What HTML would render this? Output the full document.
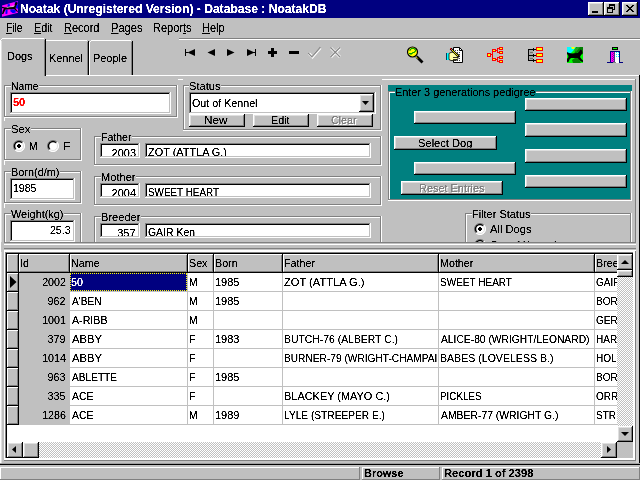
<!DOCTYPE html>
<html><head><meta charset="utf-8"><title>Noatak</title>
<style>
html,body{margin:0;padding:0;width:640px;height:480px;overflow:hidden;background:#c0c0c0}
body{position:relative;font-family:"Liberation Sans", sans-serif;}
body>div,body>span,body>svg{position:absolute;display:block}
body>span{white-space:pre}
u{text-decoration:underline;text-underline-offset:1px}
.tx{filter:url(#tf)}
</style></head>
<body>
<svg width="0" height="0" style="position:absolute"><filter id="tf" x="0" y="0" width="100%" height="100%" color-interpolation-filters="sRGB"><feComponentTransfer><feFuncA type="linear" slope="3" intercept="-0.7"/></feComponentTransfer></filter></svg>
<div style="left:0px;top:0px;width:640px;height:18px;background:#000080;"></div>
<span class="tx" style="left:20px;transform-origin:0 0;top:1px;font-size:13px;font-weight:700;color:#fff;line-height:15px;transform:scaleX(0.9304);">Noatak (Unregistered Version) - Database : NoatakDB</span>
<svg style="left:0px;top:0px" width="20" height="18" viewBox="0 0 20 18">
<path d="M2 5.600L18 1.100V12.800L2 16.800Z" fill="#ff00ff"/>
<path d="M7.500 4.300l2.200-.3.300 2.400-2.200.5z M14.600 2.200l3-.8v2.800l-2.600.5z M15.800 5l2.200-.4v4.200l-2.200-.5z M5.600 9.800l2-.3-.2 4.200-1.900.4z M10.500 9.200l5 .2.300 3.200-3 .6-2.500-2z" fill="#0000ff"/>
<path d="M2.100 6.800l3 .7 2.600-.8 3.500.1 3.200-1.200 1-3 1.800-.5.400 2-1.500 1.600-.5 2.800 2.400 3-.8.600-3-3-4.500.1-4.200.3-2.300 4.700-1.200-.2.800-3.400 1.200-2-2.200-.5z" fill="#000"/>
<path d="M6.500 7.300l3-.9 3.500-.3 1.500-.8.200.8-1.600.9-3.600.3-3 .8z" fill="#d8c8d8"/>
<path d="M12 5.800l2.300-.4v.7l-2.300.4z" fill="#ff80ff"/>
</svg>
<div style="left:588px;top:2px;width:16px;height:14px;background:#c0c0c0;"></div>
<div style="left:588px;top:2px;width:15px;height:1px;background:#fff;"></div>
<div style="left:588px;top:2px;width:1px;height:13px;background:#fff;"></div>
<div style="left:589px;top:3px;width:13px;height:1px;background:#dfdfdf;"></div>
<div style="left:589px;top:3px;width:1px;height:11px;background:#dfdfdf;"></div>
<div style="left:588px;top:15px;width:16px;height:1px;background:#000;"></div>
<div style="left:603px;top:2px;width:1px;height:14px;background:#000;"></div>
<div style="left:589px;top:14px;width:14px;height:1px;background:#808080;"></div>
<div style="left:602px;top:3px;width:1px;height:12px;background:#808080;"></div>
<div style="left:604px;top:2px;width:16px;height:14px;background:#c0c0c0;"></div>
<div style="left:604px;top:2px;width:15px;height:1px;background:#fff;"></div>
<div style="left:604px;top:2px;width:1px;height:13px;background:#fff;"></div>
<div style="left:605px;top:3px;width:13px;height:1px;background:#dfdfdf;"></div>
<div style="left:605px;top:3px;width:1px;height:11px;background:#dfdfdf;"></div>
<div style="left:604px;top:15px;width:16px;height:1px;background:#000;"></div>
<div style="left:619px;top:2px;width:1px;height:14px;background:#000;"></div>
<div style="left:605px;top:14px;width:14px;height:1px;background:#808080;"></div>
<div style="left:618px;top:3px;width:1px;height:12px;background:#808080;"></div>
<div style="left:622px;top:2px;width:16px;height:14px;background:#c0c0c0;"></div>
<div style="left:622px;top:2px;width:15px;height:1px;background:#fff;"></div>
<div style="left:622px;top:2px;width:1px;height:13px;background:#fff;"></div>
<div style="left:623px;top:3px;width:13px;height:1px;background:#dfdfdf;"></div>
<div style="left:623px;top:3px;width:1px;height:11px;background:#dfdfdf;"></div>
<div style="left:622px;top:15px;width:16px;height:1px;background:#000;"></div>
<div style="left:637px;top:2px;width:1px;height:14px;background:#000;"></div>
<div style="left:623px;top:14px;width:14px;height:1px;background:#808080;"></div>
<div style="left:636px;top:3px;width:1px;height:12px;background:#808080;"></div>
<div style="left:592px;top:11px;width:6px;height:2px;background:#000;"></div>
<div style="left:609px;top:4px;width:6px;height:2px;background:#000;"></div>
<div style="left:609px;top:6px;width:1px;height:2px;background:#000;"></div>
<div style="left:614px;top:6px;width:1px;height:4px;background:#000;"></div>
<div style="left:613px;top:9px;width:2px;height:1px;background:#000;"></div>
<div style="left:607px;top:7px;width:6px;height:2px;background:#000;"></div>
<div style="left:607px;top:9px;width:1px;height:4px;background:#000;"></div>
<div style="left:612px;top:9px;width:1px;height:4px;background:#000;"></div>
<div style="left:607px;top:12px;width:6px;height:1px;background:#000;"></div>
<div style="left:626px;top:5px;width:2px;height:1px;background:#000;"></div>
<div style="left:632px;top:5px;width:2px;height:1px;background:#000;"></div>
<div style="left:627px;top:6px;width:2px;height:1px;background:#000;"></div>
<div style="left:631px;top:6px;width:2px;height:1px;background:#000;"></div>
<div style="left:628px;top:7px;width:2px;height:1px;background:#000;"></div>
<div style="left:630px;top:7px;width:2px;height:1px;background:#000;"></div>
<div style="left:629px;top:8px;width:2px;height:1px;background:#000;"></div>
<div style="left:629px;top:8px;width:2px;height:1px;background:#000;"></div>
<div style="left:630px;top:9px;width:2px;height:1px;background:#000;"></div>
<div style="left:628px;top:9px;width:2px;height:1px;background:#000;"></div>
<div style="left:631px;top:10px;width:2px;height:1px;background:#000;"></div>
<div style="left:627px;top:10px;width:2px;height:1px;background:#000;"></div>
<div style="left:632px;top:11px;width:2px;height:1px;background:#000;"></div>
<div style="left:626px;top:11px;width:2px;height:1px;background:#000;"></div>
<span class="tx" style="left:6px;transform-origin:0 0;top:20px;font-size:13px;font-weight:400;color:#000;line-height:15px;transform:scaleX(0.7875);"><u>F</u>ile</span>
<span class="tx" style="left:34px;transform-origin:0 0;top:20px;font-size:13px;font-weight:400;color:#000;line-height:15px;transform:scaleX(0.8257);"><u>E</u>dit</span>
<span class="tx" style="left:64px;transform-origin:0 0;top:20px;font-size:13px;font-weight:400;color:#000;line-height:15px;transform:scaleX(0.8468);"><u>R</u>ecord</span>
<span class="tx" style="left:111px;transform-origin:0 0;top:20px;font-size:13px;font-weight:400;color:#000;line-height:15px;transform:scaleX(0.8542);"><u>P</u>ages</span>
<span class="tx" style="left:153px;transform-origin:0 0;top:20px;font-size:13px;font-weight:400;color:#000;line-height:15px;transform:scaleX(0.8456);">Repor<u>t</u>s</span>
<span class="tx" style="left:202px;transform-origin:0 0;top:20px;font-size:13px;font-weight:400;color:#000;line-height:15px;transform:scaleX(0.8411);"><u>H</u>elp</span>
<div style="left:46px;top:75px;width:594px;height:1px;background:#fff;"></div>
<div style="left:2px;top:38px;width:42px;height:1px;background:#fff;"></div>
<div style="left:0px;top:40px;width:1px;height:424px;background:#fff;"></div>
<div style="left:1px;top:41px;width:1px;height:423px;background:#dfdfdf;"></div>
<div style="left:1px;top:39px;width:1px;height:1px;background:#fff;"></div>
<div style="left:45px;top:39px;width:1px;height:37px;background:#000;"></div>
<div style="left:44px;top:40px;width:1px;height:36px;background:#808080;"></div>
<span class="tx" style="left:7px;transform-origin:0 0;top:49px;font-size:11.7px;font-weight:400;color:#000;line-height:14px;transform:scaleX(0.9342);">Dogs</span>
<div style="left:46px;top:40px;width:41px;height:1px;background:#fff;"></div>
<div style="left:88px;top:41px;width:1px;height:34px;background:#000;"></div>
<div style="left:87px;top:42px;width:1px;height:33px;background:#808080;"></div>
<span class="tx" style="left:49px;transform-origin:0 0;top:51px;font-size:11.7px;font-weight:400;color:#000;line-height:14px;transform:scaleX(0.9339);">Kennel</span>
<div style="left:91px;top:40px;width:40px;height:1px;background:#fff;"></div>
<div style="left:89px;top:42px;width:1px;height:33px;background:#fff;"></div>
<div style="left:90px;top:41px;width:1px;height:1px;background:#fff;"></div>
<div style="left:132px;top:41px;width:1px;height:34px;background:#000;"></div>
<div style="left:131px;top:42px;width:1px;height:33px;background:#808080;"></div>
<span class="tx" style="left:93px;transform-origin:0 0;top:51px;font-size:11.7px;font-weight:400;color:#000;line-height:14px;transform:scaleX(0.9339);">People</span>
<div style="left:179px;top:38px;width:461px;height:1px;background:#808080;"></div>
<div style="left:179px;top:39px;width:461px;height:1px;background:#fff;"></div>
<svg style="left:180px;top:40px" width="460" height="34" viewBox="180 40 460 34"><rect x="185" y="49" width="1" height="7" fill="#000"/><path d="M195 49v7l-7.5-3.5z" fill="#000"/><rect x="186" y="52" width="2" height="1" fill="#000"/><path d="M215 49v7l-7.5-3.5z" fill="#000"/><path d="M227 49v7l7.5-3.5z" fill="#000"/><path d="M247 49v7l7.5-3.5z" fill="#000"/><rect x="255" y="49" width="1" height="7" fill="#000"/><rect x="253" y="52" width="2" height="1" fill="#000"/><rect x="268" y="51" width="9" height="3" fill="#000"/><rect x="271" y="48" width="3" height="9" fill="#000"/><rect x="289" y="51" width="10" height="3" fill="#000"/><path d="M309 53.5l3.5 3.5 8-9" stroke="#fff" stroke-width="2.6" fill="none"/><path d="M308.3 53.2l3.6 3.6 8.4-9.6" stroke="#808080" stroke-width="1.200" fill="none"/><path d="M310.5 55l2 1.800 8-9" stroke="#a0a0a0" stroke-width="0.7" fill="none"/><path d="M331 48l9 9M340 48l-9 9" stroke="#fff" stroke-width="2.6" fill="none"/><path d="M330.5 47.5l9.5 9.5M340 47.5l-9.5 9.5" stroke="#868686" stroke-width="1.200" fill="none"/><line x1="416.500" y1="56.500" x2="422.500" y2="62.500" stroke="#000" stroke-width="2.800"/><line x1="416" y1="56.800" x2="417.800" y2="58.600" stroke="#e8e800" stroke-width="1"/><circle cx="412.500" cy="52" r="5" fill="#ffff00" stroke="#000" stroke-width="1.200"/><path d="M410 51v-1.500h1v-1h3.500v1h1v2h-1v1h-2v1h-1.500v1.500" stroke="#00a000" stroke-width="1" fill="none"/><rect x="409" y="53" width="2" height="1" fill="#00a000"/><path d="M453.500 47.500h6l3 3v12h-9z" fill="#fff" stroke="#000" stroke-width="1"/><path d="M459.500 47.500v3h3" fill="none" stroke="#000" stroke-width="1"/><line x1="455" y1="50.5" x2="461" y2="50.5" stroke="#404040" stroke-width="1" stroke-dasharray="1 1"/><line x1="455" y1="52.5" x2="461" y2="52.5" stroke="#404040" stroke-width="1" stroke-dasharray="1 1"/><line x1="455" y1="54.5" x2="461" y2="54.5" stroke="#404040" stroke-width="1" stroke-dasharray="1 1"/><line x1="455" y1="56.5" x2="461" y2="56.5" stroke="#404040" stroke-width="1" stroke-dasharray="1 1"/><line x1="455" y1="58.5" x2="461" y2="58.5" stroke="#404040" stroke-width="1" stroke-dasharray="1 1"/><line x1="455" y1="60.5" x2="461" y2="60.5" stroke="#404040" stroke-width="1" stroke-dasharray="1 1"/><rect x="446" y="53" width="1" height="7" fill="#004060"/><rect x="447" y="53" width="2" height="7" fill="#00ffff"/><path d="M449 53.500q2-1.500 4-1.500l4 1.500q2 .8 2 2.500l-1 1.500v1.500l-2 1.500h-5l-2-1z" fill="#ffffa8" stroke="#000" stroke-width="0.8"/><line x1="450.500" y1="48.500" x2="458.800" y2="56.800" stroke="#000" stroke-width="2.200"/><line x1="451.200" y1="49.200" x2="458" y2="56" stroke="#ffff00" stroke-width="0.9"/><rect x="450" y="48" width="1" height="1" fill="#ff0000"/><rect x="451" y="49" width="1" height="1" fill="#ff4040"/><line x1="453" y1="57.500" x2="458" y2="57.500" stroke="#000" stroke-width="0.8"/><line x1="453" y1="59.500" x2="457" y2="59.500" stroke="#000" stroke-width="0.8"/><rect x="487" y="53" width="4" height="4" fill="#ff0000"/><rect x="488" y="54" width="2" height="2" fill="#ffff00"/><rect x="492" y="49" width="4" height="3" fill="#ff0000"/><rect x="493" y="50" width="2" height="1" fill="#ffff00"/><rect x="492" y="58" width="4" height="3" fill="#ff0000"/><rect x="493" y="59" width="2" height="1" fill="#ffff00"/><rect x="499" y="47" width="4" height="3" fill="#ff0000"/><rect x="500" y="48" width="2" height="1" fill="#ffff00"/><rect x="499" y="51" width="4" height="3" fill="#ff0000"/><rect x="500" y="52" width="2" height="1" fill="#ffff00"/><rect x="499" y="56" width="4" height="3" fill="#ff0000"/><rect x="500" y="57" width="2" height="1" fill="#ffff00"/><rect x="499" y="60" width="4" height="3" fill="#ff0000"/><rect x="500" y="61" width="2" height="1" fill="#ffff00"/><rect x="491" y="54" width="2" height="1" fill="#ff0000"/><rect x="492" y="52" width="1" height="6" fill="#ff0000"/><rect x="496" y="50" width="2" height="1" fill="#ff0000"/><rect x="497" y="48" width="1" height="5" fill="#ff0000"/><rect x="497" y="48" width="2" height="1" fill="#ff0000"/><rect x="497" y="52" width="2" height="1" fill="#ff0000"/><rect x="496" y="59" width="2" height="1" fill="#ff0000"/><rect x="497" y="57" width="1" height="5" fill="#ff0000"/><rect x="497" y="57" width="2" height="1" fill="#ff0000"/><rect x="497" y="61" width="2" height="1" fill="#ff0000"/><rect x="528" y="49" width="1" height="12" fill="#000"/><rect x="528" y="49" width="7" height="1" fill="#000"/><rect x="533" y="48" width="1" height="3" fill="#000"/><rect x="534" y="49" width="2" height="1" fill="#000"/><rect x="528" y="55" width="7" height="1" fill="#000"/><rect x="533" y="54" width="1" height="3" fill="#000"/><rect x="534" y="55" width="2" height="1" fill="#000"/><rect x="528" y="60" width="7" height="1" fill="#000"/><rect x="533" y="59" width="1" height="3" fill="#000"/><rect x="534" y="60" width="2" height="1" fill="#000"/><rect x="529" y="50" width="4" height="5" fill="#a8a8a8"/><rect x="529" y="56" width="4" height="4" fill="#a8a8a8"/><rect x="530" y="52" width="3" height="1" fill="#707070"/><rect x="530" y="58" width="3" height="1" fill="#707070"/><rect x="536" y="47" width="7" height="4" fill="#ff0000"/><rect x="537" y="48" width="5" height="2" fill="#ffff00"/><rect x="536" y="53" width="7" height="4" fill="#ff0000"/><rect x="537" y="54" width="5" height="2" fill="#ffff00"/><rect x="536" y="59" width="7" height="4" fill="#ff0000"/><rect x="537" y="60" width="5" height="2" fill="#ffff00"/><rect x="567" y="47" width="16" height="16" fill="#00ff00"/><path d="M567 47h9l-3 4-3 3h-3z" fill="#00ffff"/><path d="M571 47h4l-1 2h-2z" fill="#ffff00"/><path d="M576 47h7v7l-3 1-2-3-4 3z" fill="#008000"/><path d="M574 50l3-3h3l-4 5z" fill="#20a020"/><path d="M572 60l3-2 4 1 2 4h-8z" fill="#008000"/><path d="M567 52L569 53 572 53.500 577 53 579 52 580.500 49.500 582 50.500 582.500 53 581 55 580 57 581.500 59 583 60.500V62L581 61.500 578 58.500 575 58H571L569.500 59.500 568.500 62H567V59L568.500 57 568 55 567 54Z" fill="#000"/><rect x="612" y="47" width="6" height="3" fill="#000"/><rect x="613" y="48" width="4" height="1" fill="#00ff00"/><rect x="610" y="51" width="10" height="1" fill="#000080"/><rect x="610" y="51" width="1" height="12" fill="#000080"/><rect x="619" y="51" width="1" height="12" fill="#000080"/><rect x="607" y="62" width="16" height="1" fill="#000080"/><rect x="611" y="52" width="4" height="10" fill="#ff00ff"/><rect x="615" y="52" width="4" height="10" fill="#fff"/><rect x="612" y="52" width="1" height="1" fill="#a000a0"/><rect x="613" y="53" width="1" height="1" fill="#a000a0"/><rect x="616" y="52" width="1" height="1" fill="#00ffff"/><rect x="618" y="52" width="1" height="1" fill="#00ffff"/><rect x="612" y="54" width="1" height="1" fill="#a000a0"/><rect x="613" y="55" width="1" height="1" fill="#a000a0"/><rect x="616" y="54" width="1" height="1" fill="#00ffff"/><rect x="618" y="54" width="1" height="1" fill="#00ffff"/><rect x="612" y="56" width="1" height="1" fill="#a000a0"/><rect x="613" y="57" width="1" height="1" fill="#a000a0"/><rect x="616" y="56" width="1" height="1" fill="#00ffff"/><rect x="618" y="56" width="1" height="1" fill="#00ffff"/><rect x="612" y="58" width="1" height="1" fill="#a000a0"/><rect x="613" y="59" width="1" height="1" fill="#a000a0"/><rect x="616" y="58" width="1" height="1" fill="#00ffff"/><rect x="618" y="58" width="1" height="1" fill="#00ffff"/><rect x="612" y="60" width="1" height="1" fill="#a000a0"/><rect x="613" y="61" width="1" height="1" fill="#a000a0"/><rect x="616" y="60" width="1" height="1" fill="#00ffff"/><rect x="618" y="60" width="1" height="1" fill="#00ffff"/><path d="M615 57h4v6h-3l-1-1z" fill="#fff"/><rect x="614" y="52" width="1" height="10" fill="#404080"/><rect x="613" y="62" width="3" height="1" fill="#808080"/></svg>
<div style="left:178px;top:79px;width:5px;height:1px;background:#fff;"></div>
<div style="left:4px;top:85px;width:173px;height:1px;background:#808080;"></div>
<div style="left:5px;top:86px;width:172px;height:1px;background:#fff;"></div>
<div style="left:4px;top:85px;width:1px;height:32px;background:#808080;"></div>
<div style="left:5px;top:86px;width:1px;height:31px;background:#fff;"></div>
<div style="left:176px;top:85px;width:1px;height:32px;background:#808080;"></div>
<div style="left:177px;top:85px;width:1px;height:33px;background:#fff;"></div>
<div style="left:4px;top:116px;width:173px;height:1px;background:#808080;"></div>
<div style="left:4px;top:117px;width:174px;height:1px;background:#fff;"></div>
<div style="left:11px;top:85px;width:28px;height:2px;background:#c0c0c0;"></div>
<span class="tx" style="left:11px;transform-origin:0 0;top:79px;font-size:11.7px;font-weight:400;color:#000;line-height:14px;transform:scaleX(0.8818);">Name</span>
<div style="left:10px;top:92px;width:161px;height:22px;background:#fff;"></div>
<div style="left:10px;top:92px;width:160px;height:1px;background:#808080;"></div>
<div style="left:10px;top:92px;width:1px;height:21px;background:#808080;"></div>
<div style="left:11px;top:93px;width:158px;height:1px;background:#000;"></div>
<div style="left:11px;top:93px;width:1px;height:19px;background:#000;"></div>
<div style="left:10px;top:113px;width:161px;height:1px;background:#fff;"></div>
<div style="left:170px;top:92px;width:1px;height:22px;background:#fff;"></div>
<div style="left:11px;top:112px;width:159px;height:1px;background:#c0c0c0;"></div>
<div style="left:169px;top:93px;width:1px;height:20px;background:#c0c0c0;"></div>
<div style="left:12px;top:94px;width:157px;height:18px;overflow:hidden"><span class="tx" style="position:absolute;white-space:pre;left:1px;transform-origin:0 0;top:2px;font-size:11px;font-weight:700;color:#f00;line-height:13px;transform:scaleX(1.0000)">50</span></div>
<div style="left:4px;top:118px;width:1px;height:3px;background:#fff;"></div>
<div style="left:4px;top:128px;width:77px;height:1px;background:#808080;"></div>
<div style="left:5px;top:129px;width:76px;height:1px;background:#fff;"></div>
<div style="left:4px;top:128px;width:1px;height:32px;background:#808080;"></div>
<div style="left:5px;top:129px;width:1px;height:31px;background:#fff;"></div>
<div style="left:80px;top:128px;width:1px;height:32px;background:#808080;"></div>
<div style="left:81px;top:128px;width:1px;height:33px;background:#fff;"></div>
<div style="left:4px;top:159px;width:77px;height:1px;background:#808080;"></div>
<div style="left:4px;top:160px;width:78px;height:1px;background:#fff;"></div>
<div style="left:11px;top:128px;width:20px;height:2px;background:#c0c0c0;"></div>
<span class="tx" style="left:11px;transform-origin:0 0;top:122px;font-size:11.7px;font-weight:400;color:#000;line-height:14px;transform:scaleX(0.9682);">Sex</span>
<svg style="left:13px;top:140px" width="12" height="12" viewBox="0 0 12 12"><circle cx="6" cy="6" r="5.5" fill="#fff"/><path d="M10 2 A5.5 5.5 0 0 0 2 10" stroke="#808080" stroke-width="1" fill="none"/><path d="M9.2 2.800 A4.500 4.500 0 0 0 2.800 9.200" stroke="#000" stroke-width="1.500" fill="none"/><path d="M2 10 A5.5 5.5 0 0 0 10 2" stroke="#fff" stroke-width="1" fill="none"/><path d="M2.8 9.2 A4.5 4.5 0 0 0 9.2 2.8" stroke="#dfdfdf" stroke-width="1" fill="none"/><path d="M5 4h2v1h1v2h-1v1h-2v-1h-1v-2h1z" fill="#000"/></svg>
<span class="tx" style="left:29px;transform-origin:0 0;top:139px;font-size:11.7px;font-weight:400;color:#000;line-height:14px;transform:scaleX(0.8718);">M</span>
<svg style="left:47px;top:140px" width="12" height="12" viewBox="0 0 12 12"><circle cx="6" cy="6" r="5.5" fill="#fff"/><path d="M10 2 A5.5 5.5 0 0 0 2 10" stroke="#808080" stroke-width="1" fill="none"/><path d="M9.2 2.800 A4.500 4.500 0 0 0 2.800 9.200" stroke="#000" stroke-width="1.500" fill="none"/><path d="M2 10 A5.5 5.5 0 0 0 10 2" stroke="#fff" stroke-width="1" fill="none"/><path d="M2.8 9.2 A4.5 4.5 0 0 0 9.2 2.8" stroke="#dfdfdf" stroke-width="1" fill="none"/></svg>
<span class="tx" style="left:63px;transform-origin:0 0;top:139px;font-size:11.7px;font-weight:400;color:#000;line-height:14px;transform:scaleX(1.0503);">F</span>
<div style="left:4px;top:161px;width:1px;height:4px;background:#fff;"></div>
<div style="left:4px;top:171px;width:77px;height:1px;background:#808080;"></div>
<div style="left:5px;top:172px;width:76px;height:1px;background:#fff;"></div>
<div style="left:4px;top:171px;width:1px;height:32px;background:#808080;"></div>
<div style="left:5px;top:172px;width:1px;height:31px;background:#fff;"></div>
<div style="left:80px;top:171px;width:1px;height:32px;background:#808080;"></div>
<div style="left:81px;top:171px;width:1px;height:33px;background:#fff;"></div>
<div style="left:4px;top:202px;width:77px;height:1px;background:#808080;"></div>
<div style="left:4px;top:203px;width:78px;height:1px;background:#fff;"></div>
<div style="left:11px;top:171px;width:49px;height:2px;background:#c0c0c0;"></div>
<span class="tx" style="left:11px;transform-origin:0 0;top:165px;font-size:11.7px;font-weight:400;color:#000;line-height:14px;transform:scaleX(0.9333);">Born(d/m)</span>
<div style="left:10px;top:178px;width:65px;height:22px;background:#fff;"></div>
<div style="left:10px;top:178px;width:64px;height:1px;background:#808080;"></div>
<div style="left:10px;top:178px;width:1px;height:21px;background:#808080;"></div>
<div style="left:11px;top:179px;width:62px;height:1px;background:#000;"></div>
<div style="left:11px;top:179px;width:1px;height:19px;background:#000;"></div>
<div style="left:10px;top:199px;width:65px;height:1px;background:#fff;"></div>
<div style="left:74px;top:178px;width:1px;height:22px;background:#fff;"></div>
<div style="left:11px;top:198px;width:63px;height:1px;background:#c0c0c0;"></div>
<div style="left:73px;top:179px;width:1px;height:20px;background:#c0c0c0;"></div>
<div style="left:12px;top:180px;width:61px;height:18px;overflow:hidden"><span class="tx" style="position:absolute;white-space:pre;left:1px;transform-origin:0 0;top:1px;font-size:11.7px;font-weight:400;color:#000;line-height:14px;transform:scaleX(0.9033)">1985</span></div>
<div style="left:4px;top:204px;width:1px;height:4px;background:#fff;"></div>
<div style="left:4px;top:213px;width:77px;height:1px;background:#808080;"></div>
<div style="left:5px;top:214px;width:76px;height:1px;background:#fff;"></div>
<div style="left:4px;top:213px;width:1px;height:31px;background:#808080;"></div>
<div style="left:5px;top:214px;width:1px;height:30px;background:#fff;"></div>
<div style="left:80px;top:213px;width:1px;height:31px;background:#808080;"></div>
<div style="left:81px;top:213px;width:1px;height:32px;background:#fff;"></div>
<div style="left:11px;top:213px;width:53px;height:2px;background:#c0c0c0;"></div>
<span class="tx" style="left:11px;transform-origin:0 0;top:207px;font-size:11.7px;font-weight:400;color:#000;line-height:14px;transform:scaleX(0.9326);">Weight(kg)</span>
<div style="left:10px;top:220px;width:65px;height:22px;background:#fff;"></div>
<div style="left:10px;top:220px;width:64px;height:1px;background:#808080;"></div>
<div style="left:10px;top:220px;width:1px;height:21px;background:#808080;"></div>
<div style="left:11px;top:221px;width:62px;height:1px;background:#000;"></div>
<div style="left:11px;top:221px;width:1px;height:19px;background:#000;"></div>
<div style="left:10px;top:241px;width:65px;height:1px;background:#fff;"></div>
<div style="left:74px;top:220px;width:1px;height:22px;background:#fff;"></div>
<div style="left:11px;top:240px;width:63px;height:1px;background:#c0c0c0;"></div>
<div style="left:73px;top:221px;width:1px;height:20px;background:#c0c0c0;"></div>
<div style="left:12px;top:222px;width:61px;height:18px;overflow:hidden"><span class="tx" style="position:absolute;white-space:pre;left:36.25px;transform-origin:100% 0;top:1px;font-size:11.7px;font-weight:400;color:#000;line-height:14px;transform:scaleX(0.9170)">25.3</span></div>
<div style="left:183px;top:85px;width:198px;height:1px;background:#808080;"></div>
<div style="left:184px;top:86px;width:197px;height:1px;background:#fff;"></div>
<div style="left:183px;top:85px;width:1px;height:45px;background:#808080;"></div>
<div style="left:184px;top:86px;width:1px;height:44px;background:#fff;"></div>
<div style="left:380px;top:85px;width:1px;height:45px;background:#808080;"></div>
<div style="left:381px;top:85px;width:1px;height:46px;background:#fff;"></div>
<div style="left:183px;top:129px;width:198px;height:1px;background:#808080;"></div>
<div style="left:183px;top:130px;width:199px;height:1px;background:#fff;"></div>
<div style="left:189px;top:85px;width:32px;height:2px;background:#c0c0c0;"></div>
<span class="tx" style="left:189px;transform-origin:0 0;top:79px;font-size:11.7px;font-weight:400;color:#000;line-height:14px;transform:scaleX(0.9505);">Status</span>
<div style="left:189px;top:92px;width:187px;height:22px;background:#fff;"></div>
<div style="left:189px;top:92px;width:186px;height:1px;background:#808080;"></div>
<div style="left:189px;top:92px;width:1px;height:21px;background:#808080;"></div>
<div style="left:190px;top:93px;width:184px;height:1px;background:#000;"></div>
<div style="left:190px;top:93px;width:1px;height:19px;background:#000;"></div>
<div style="left:189px;top:113px;width:187px;height:1px;background:#fff;"></div>
<div style="left:375px;top:92px;width:1px;height:22px;background:#fff;"></div>
<div style="left:190px;top:112px;width:185px;height:1px;background:#c0c0c0;"></div>
<div style="left:374px;top:93px;width:1px;height:20px;background:#c0c0c0;"></div>
<div style="left:191px;top:94px;width:166px;height:18px;overflow:hidden"><span class="tx" style="position:absolute;white-space:pre;left:1px;transform-origin:0 0;top:2px;font-size:11.7px;font-weight:400;color:#000;line-height:14px;transform:scaleX(0.9163)">Out of Kennel</span></div>
<div style="left:359px;top:94px;width:15px;height:18px;background:#c0c0c0;"></div>
<div style="left:359px;top:94px;width:14px;height:1px;background:#fff;"></div>
<div style="left:359px;top:94px;width:1px;height:17px;background:#fff;"></div>
<div style="left:360px;top:95px;width:12px;height:1px;background:#dfdfdf;"></div>
<div style="left:360px;top:95px;width:1px;height:15px;background:#dfdfdf;"></div>
<div style="left:359px;top:111px;width:15px;height:1px;background:#000;"></div>
<div style="left:373px;top:94px;width:1px;height:18px;background:#000;"></div>
<div style="left:360px;top:110px;width:13px;height:1px;background:#808080;"></div>
<div style="left:372px;top:95px;width:1px;height:16px;background:#808080;"></div>
<svg style="left:359px;top:94px" width="15" height="18"><path d="M3 7h7l-3.5 4z" fill="#000"/></svg>
<div style="left:189px;top:114px;width:56px;height:13px;background:#c0c0c0;"></div>
<div style="left:189px;top:114px;width:55px;height:1px;background:#fff;"></div>
<div style="left:189px;top:114px;width:1px;height:12px;background:#fff;"></div>
<div style="left:190px;top:115px;width:53px;height:1px;background:#dfdfdf;"></div>
<div style="left:190px;top:115px;width:1px;height:10px;background:#dfdfdf;"></div>
<div style="left:189px;top:126px;width:56px;height:1px;background:#000;"></div>
<div style="left:244px;top:114px;width:1px;height:13px;background:#000;"></div>
<div style="left:190px;top:125px;width:54px;height:1px;background:#808080;"></div>
<div style="left:243px;top:115px;width:1px;height:11px;background:#808080;"></div>
<div style="left:190px;top:115px;width:53px;height:10px;overflow:hidden"><span class="tx" style="position:absolute;white-space:pre;left:14.00px;transform-origin:0 0;top:-2px;font-size:11.7px;color:#000;line-height:14px;transform:scaleX(1.0047)">New</span></div>
<div style="left:253px;top:114px;width:56px;height:13px;background:#c0c0c0;"></div>
<div style="left:253px;top:114px;width:55px;height:1px;background:#fff;"></div>
<div style="left:253px;top:114px;width:1px;height:12px;background:#fff;"></div>
<div style="left:254px;top:115px;width:53px;height:1px;background:#dfdfdf;"></div>
<div style="left:254px;top:115px;width:1px;height:10px;background:#dfdfdf;"></div>
<div style="left:253px;top:126px;width:56px;height:1px;background:#000;"></div>
<div style="left:308px;top:114px;width:1px;height:13px;background:#000;"></div>
<div style="left:254px;top:125px;width:54px;height:1px;background:#808080;"></div>
<div style="left:307px;top:115px;width:1px;height:11px;background:#808080;"></div>
<div style="left:254px;top:115px;width:53px;height:10px;overflow:hidden"><span class="tx" style="position:absolute;white-space:pre;left:16.50px;transform-origin:0 0;top:-2px;font-size:11.7px;color:#000;line-height:14px;transform:scaleX(0.9185)">Edit</span></div>
<div style="left:317px;top:114px;width:56px;height:13px;background:#c0c0c0;"></div>
<div style="left:317px;top:114px;width:55px;height:1px;background:#fff;"></div>
<div style="left:317px;top:114px;width:1px;height:12px;background:#fff;"></div>
<div style="left:318px;top:115px;width:53px;height:1px;background:#dfdfdf;"></div>
<div style="left:318px;top:115px;width:1px;height:10px;background:#dfdfdf;"></div>
<div style="left:317px;top:126px;width:56px;height:1px;background:#000;"></div>
<div style="left:372px;top:114px;width:1px;height:13px;background:#000;"></div>
<div style="left:318px;top:125px;width:54px;height:1px;background:#808080;"></div>
<div style="left:371px;top:115px;width:1px;height:11px;background:#808080;"></div>
<div style="left:318px;top:115px;width:53px;height:10px;overflow:hidden"><span class="tx" style="position:absolute;white-space:pre;left:14.00px;transform-origin:0 0;top:-1px;font-size:11.7px;color:#fff;line-height:14px;transform:scaleX(0.9128)">Clear</span></div>
<div style="left:318px;top:115px;width:53px;height:10px;overflow:hidden"><span class="tx" style="position:absolute;white-space:pre;left:13.00px;transform-origin:0 0;top:-2px;font-size:11.7px;color:#808080;line-height:14px;transform:scaleX(0.9128)">Clear</span></div>
<div style="left:94px;top:136px;width:287px;height:1px;background:#808080;"></div>
<div style="left:95px;top:137px;width:286px;height:1px;background:#fff;"></div>
<div style="left:94px;top:136px;width:1px;height:29px;background:#808080;"></div>
<div style="left:95px;top:137px;width:1px;height:28px;background:#fff;"></div>
<div style="left:380px;top:136px;width:1px;height:29px;background:#808080;"></div>
<div style="left:381px;top:136px;width:1px;height:30px;background:#fff;"></div>
<div style="left:94px;top:164px;width:287px;height:1px;background:#808080;"></div>
<div style="left:94px;top:165px;width:288px;height:1px;background:#fff;"></div>
<div style="left:101px;top:136px;width:31px;height:2px;background:#c0c0c0;"></div>
<span class="tx" style="left:101px;transform-origin:0 0;top:130px;font-size:11.7px;font-weight:400;color:#000;line-height:14px;transform:scaleX(0.9029);">Father</span>
<div style="left:100px;top:143px;width:40px;height:15px;background:#fff;"></div>
<div style="left:100px;top:143px;width:39px;height:1px;background:#808080;"></div>
<div style="left:100px;top:143px;width:1px;height:14px;background:#808080;"></div>
<div style="left:101px;top:144px;width:37px;height:1px;background:#000;"></div>
<div style="left:101px;top:144px;width:1px;height:12px;background:#000;"></div>
<div style="left:100px;top:157px;width:40px;height:1px;background:#fff;"></div>
<div style="left:139px;top:143px;width:1px;height:15px;background:#fff;"></div>
<div style="left:101px;top:156px;width:38px;height:1px;background:#c0c0c0;"></div>
<div style="left:138px;top:144px;width:1px;height:13px;background:#c0c0c0;"></div>
<div style="left:102px;top:145px;width:36px;height:11px;overflow:hidden"><span class="tx" style="position:absolute;white-space:pre;left:7.98px;transform-origin:100% 0;top:1px;font-size:11.7px;font-weight:400;color:#000;line-height:14px;transform:scaleX(0.9400)">2003</span></div>
<div style="left:145px;top:143px;width:226px;height:15px;background:#fff;"></div>
<div style="left:145px;top:143px;width:225px;height:1px;background:#808080;"></div>
<div style="left:145px;top:143px;width:1px;height:14px;background:#808080;"></div>
<div style="left:146px;top:144px;width:223px;height:1px;background:#000;"></div>
<div style="left:146px;top:144px;width:1px;height:12px;background:#000;"></div>
<div style="left:145px;top:157px;width:226px;height:1px;background:#fff;"></div>
<div style="left:370px;top:143px;width:1px;height:15px;background:#fff;"></div>
<div style="left:146px;top:156px;width:224px;height:1px;background:#c0c0c0;"></div>
<div style="left:369px;top:144px;width:1px;height:13px;background:#c0c0c0;"></div>
<div style="left:147px;top:145px;width:222px;height:11px;overflow:hidden"><span class="tx" style="position:absolute;white-space:pre;left:1px;transform-origin:0 0;top:0px;font-size:11.7px;font-weight:400;color:#000;line-height:14px;transform:scaleX(0.9334)">ZOT (ATTLA G.)</span></div>
<div style="left:94px;top:176px;width:287px;height:1px;background:#808080;"></div>
<div style="left:95px;top:177px;width:286px;height:1px;background:#fff;"></div>
<div style="left:94px;top:176px;width:1px;height:29px;background:#808080;"></div>
<div style="left:95px;top:177px;width:1px;height:28px;background:#fff;"></div>
<div style="left:380px;top:176px;width:1px;height:29px;background:#808080;"></div>
<div style="left:381px;top:176px;width:1px;height:30px;background:#fff;"></div>
<div style="left:94px;top:204px;width:287px;height:1px;background:#808080;"></div>
<div style="left:94px;top:205px;width:288px;height:1px;background:#fff;"></div>
<div style="left:101px;top:176px;width:35px;height:2px;background:#c0c0c0;"></div>
<span class="tx" style="left:101px;transform-origin:0 0;top:170px;font-size:11.7px;font-weight:400;color:#000;line-height:14px;transform:scaleX(0.9480);">Mother</span>
<div style="left:100px;top:183px;width:40px;height:15px;background:#fff;"></div>
<div style="left:100px;top:183px;width:39px;height:1px;background:#808080;"></div>
<div style="left:100px;top:183px;width:1px;height:14px;background:#808080;"></div>
<div style="left:101px;top:184px;width:37px;height:1px;background:#000;"></div>
<div style="left:101px;top:184px;width:1px;height:12px;background:#000;"></div>
<div style="left:100px;top:197px;width:40px;height:1px;background:#fff;"></div>
<div style="left:139px;top:183px;width:1px;height:15px;background:#fff;"></div>
<div style="left:101px;top:196px;width:38px;height:1px;background:#c0c0c0;"></div>
<div style="left:138px;top:184px;width:1px;height:13px;background:#c0c0c0;"></div>
<div style="left:102px;top:185px;width:36px;height:11px;overflow:hidden"><span class="tx" style="position:absolute;white-space:pre;left:7.98px;transform-origin:100% 0;top:1px;font-size:11.7px;font-weight:400;color:#000;line-height:14px;transform:scaleX(0.9400)">2004</span></div>
<div style="left:145px;top:183px;width:226px;height:15px;background:#fff;"></div>
<div style="left:145px;top:183px;width:225px;height:1px;background:#808080;"></div>
<div style="left:145px;top:183px;width:1px;height:14px;background:#808080;"></div>
<div style="left:146px;top:184px;width:223px;height:1px;background:#000;"></div>
<div style="left:146px;top:184px;width:1px;height:12px;background:#000;"></div>
<div style="left:145px;top:197px;width:226px;height:1px;background:#fff;"></div>
<div style="left:370px;top:183px;width:1px;height:15px;background:#fff;"></div>
<div style="left:146px;top:196px;width:224px;height:1px;background:#c0c0c0;"></div>
<div style="left:369px;top:184px;width:1px;height:13px;background:#c0c0c0;"></div>
<div style="left:147px;top:185px;width:222px;height:11px;overflow:hidden"><span class="tx" style="position:absolute;white-space:pre;left:1px;transform-origin:0 0;top:0px;font-size:11.7px;font-weight:400;color:#000;line-height:14px;transform:scaleX(0.8452)">SWEET HEART</span></div>
<div style="left:94px;top:216px;width:287px;height:1px;background:#808080;"></div>
<div style="left:95px;top:217px;width:286px;height:1px;background:#fff;"></div>
<div style="left:94px;top:216px;width:1px;height:29px;background:#808080;"></div>
<div style="left:95px;top:217px;width:1px;height:28px;background:#fff;"></div>
<div style="left:380px;top:216px;width:1px;height:29px;background:#808080;"></div>
<div style="left:381px;top:216px;width:1px;height:30px;background:#fff;"></div>
<div style="left:101px;top:216px;width:40px;height:2px;background:#c0c0c0;"></div>
<span class="tx" style="left:101px;transform-origin:0 0;top:210px;font-size:11.7px;font-weight:400;color:#000;line-height:14px;transform:scaleX(0.9497);">Breeder</span>
<div style="left:100px;top:223px;width:40px;height:15px;background:#fff;"></div>
<div style="left:100px;top:223px;width:39px;height:1px;background:#808080;"></div>
<div style="left:100px;top:223px;width:1px;height:14px;background:#808080;"></div>
<div style="left:101px;top:224px;width:37px;height:1px;background:#000;"></div>
<div style="left:101px;top:224px;width:1px;height:12px;background:#000;"></div>
<div style="left:100px;top:237px;width:40px;height:1px;background:#fff;"></div>
<div style="left:139px;top:223px;width:1px;height:15px;background:#fff;"></div>
<div style="left:101px;top:236px;width:38px;height:1px;background:#c0c0c0;"></div>
<div style="left:138px;top:224px;width:1px;height:13px;background:#c0c0c0;"></div>
<div style="left:102px;top:225px;width:36px;height:11px;overflow:hidden"><span class="tx" style="position:absolute;white-space:pre;left:14.48px;transform-origin:100% 0;top:1px;font-size:11.7px;font-weight:400;color:#000;line-height:14px;transform:scaleX(0.9400)">357</span></div>
<div style="left:145px;top:223px;width:226px;height:15px;background:#fff;"></div>
<div style="left:145px;top:223px;width:225px;height:1px;background:#808080;"></div>
<div style="left:145px;top:223px;width:1px;height:14px;background:#808080;"></div>
<div style="left:146px;top:224px;width:223px;height:1px;background:#000;"></div>
<div style="left:146px;top:224px;width:1px;height:12px;background:#000;"></div>
<div style="left:145px;top:237px;width:226px;height:1px;background:#fff;"></div>
<div style="left:370px;top:223px;width:1px;height:15px;background:#fff;"></div>
<div style="left:146px;top:236px;width:224px;height:1px;background:#c0c0c0;"></div>
<div style="left:369px;top:224px;width:1px;height:13px;background:#c0c0c0;"></div>
<div style="left:147px;top:225px;width:222px;height:11px;overflow:hidden"><span class="tx" style="position:absolute;white-space:pre;left:1px;transform-origin:0 0;top:0px;font-size:11.7px;font-weight:400;color:#000;line-height:14px;transform:scaleX(0.8931)">GAIR Ken</span></div>
<div style="left:382px;top:79px;width:253px;height:1px;background:#fff;"></div>
<div style="left:635px;top:79px;width:1px;height:163px;background:#808080;"></div>
<div style="left:388px;top:85px;width:244px;height:116px;background:#008080;"></div>
<div style="left:388px;top:91px;width:243px;height:1px;background:#808080;"></div>
<div style="left:389px;top:92px;width:242px;height:1px;background:#fff;"></div>
<div style="left:388px;top:91px;width:1px;height:109px;background:#808080;"></div>
<div style="left:389px;top:92px;width:1px;height:108px;background:#fff;"></div>
<div style="left:630px;top:91px;width:1px;height:109px;background:#808080;"></div>
<div style="left:631px;top:91px;width:1px;height:110px;background:#fff;"></div>
<div style="left:388px;top:199px;width:243px;height:1px;background:#808080;"></div>
<div style="left:388px;top:200px;width:244px;height:1px;background:#fff;"></div>
<div style="left:395px;top:91px;width:141px;height:2px;background:#008080;"></div>
<span class="tx" style="left:395px;transform-origin:0 0;top:85px;font-size:11.7px;font-weight:400;color:#000;line-height:14px;transform:scaleX(0.9320);">Enter 3 generations pedigree</span>
<div style="left:414px;top:111px;width:102px;height:13px;background:#c0c0c0;"></div>
<div style="left:414px;top:111px;width:101px;height:1px;background:#fff;"></div>
<div style="left:414px;top:111px;width:1px;height:12px;background:#fff;"></div>
<div style="left:415px;top:112px;width:99px;height:1px;background:#dfdfdf;"></div>
<div style="left:415px;top:112px;width:1px;height:10px;background:#dfdfdf;"></div>
<div style="left:414px;top:123px;width:102px;height:1px;background:#000;"></div>
<div style="left:515px;top:111px;width:1px;height:13px;background:#000;"></div>
<div style="left:415px;top:122px;width:100px;height:1px;background:#808080;"></div>
<div style="left:514px;top:112px;width:1px;height:11px;background:#808080;"></div>
<div style="left:394px;top:136px;width:103px;height:14px;background:#c0c0c0;"></div>
<div style="left:394px;top:136px;width:102px;height:1px;background:#fff;"></div>
<div style="left:394px;top:136px;width:1px;height:13px;background:#fff;"></div>
<div style="left:395px;top:137px;width:100px;height:1px;background:#dfdfdf;"></div>
<div style="left:395px;top:137px;width:1px;height:11px;background:#dfdfdf;"></div>
<div style="left:394px;top:149px;width:103px;height:1px;background:#000;"></div>
<div style="left:496px;top:136px;width:1px;height:14px;background:#000;"></div>
<div style="left:395px;top:148px;width:101px;height:1px;background:#808080;"></div>
<div style="left:495px;top:137px;width:1px;height:12px;background:#808080;"></div>
<div style="left:395px;top:137px;width:100px;height:11px;overflow:hidden"><span class="tx" style="position:absolute;white-space:pre;left:23.00px;transform-origin:0 0;top:-1px;font-size:11.7px;color:#000;line-height:14px;transform:scaleX(0.9533)">Select Dog</span></div>
<div style="left:414px;top:162px;width:102px;height:13px;background:#c0c0c0;"></div>
<div style="left:414px;top:162px;width:101px;height:1px;background:#fff;"></div>
<div style="left:414px;top:162px;width:1px;height:12px;background:#fff;"></div>
<div style="left:415px;top:163px;width:99px;height:1px;background:#dfdfdf;"></div>
<div style="left:415px;top:163px;width:1px;height:10px;background:#dfdfdf;"></div>
<div style="left:414px;top:174px;width:102px;height:1px;background:#000;"></div>
<div style="left:515px;top:162px;width:1px;height:13px;background:#000;"></div>
<div style="left:415px;top:173px;width:100px;height:1px;background:#808080;"></div>
<div style="left:514px;top:163px;width:1px;height:11px;background:#808080;"></div>
<div style="left:401px;top:181px;width:102px;height:14px;background:#c0c0c0;"></div>
<div style="left:401px;top:181px;width:101px;height:1px;background:#fff;"></div>
<div style="left:401px;top:181px;width:1px;height:13px;background:#fff;"></div>
<div style="left:402px;top:182px;width:99px;height:1px;background:#dfdfdf;"></div>
<div style="left:402px;top:182px;width:1px;height:11px;background:#dfdfdf;"></div>
<div style="left:401px;top:194px;width:102px;height:1px;background:#000;"></div>
<div style="left:502px;top:181px;width:1px;height:14px;background:#000;"></div>
<div style="left:402px;top:193px;width:100px;height:1px;background:#808080;"></div>
<div style="left:501px;top:182px;width:1px;height:12px;background:#808080;"></div>
<div style="left:402px;top:182px;width:99px;height:11px;overflow:hidden"><span class="tx" style="position:absolute;white-space:pre;left:18.00px;transform-origin:0 0;top:0px;font-size:11.7px;color:#fff;line-height:14px;transform:scaleX(0.9336)">Reset Entries</span></div>
<div style="left:402px;top:182px;width:99px;height:11px;overflow:hidden"><span class="tx" style="position:absolute;white-space:pre;left:17.00px;transform-origin:0 0;top:-1px;font-size:11.7px;color:#808080;line-height:14px;transform:scaleX(0.9336)">Reset Entries</span></div>
<div style="left:525px;top:98px;width:102px;height:13px;background:#c0c0c0;"></div>
<div style="left:525px;top:98px;width:101px;height:1px;background:#fff;"></div>
<div style="left:525px;top:98px;width:1px;height:12px;background:#fff;"></div>
<div style="left:526px;top:99px;width:99px;height:1px;background:#dfdfdf;"></div>
<div style="left:526px;top:99px;width:1px;height:10px;background:#dfdfdf;"></div>
<div style="left:525px;top:110px;width:102px;height:1px;background:#000;"></div>
<div style="left:626px;top:98px;width:1px;height:13px;background:#000;"></div>
<div style="left:526px;top:109px;width:100px;height:1px;background:#808080;"></div>
<div style="left:625px;top:99px;width:1px;height:11px;background:#808080;"></div>
<div style="left:525px;top:123px;width:102px;height:14px;background:#c0c0c0;"></div>
<div style="left:525px;top:123px;width:101px;height:1px;background:#fff;"></div>
<div style="left:525px;top:123px;width:1px;height:13px;background:#fff;"></div>
<div style="left:526px;top:124px;width:99px;height:1px;background:#dfdfdf;"></div>
<div style="left:526px;top:124px;width:1px;height:11px;background:#dfdfdf;"></div>
<div style="left:525px;top:136px;width:102px;height:1px;background:#000;"></div>
<div style="left:626px;top:123px;width:1px;height:14px;background:#000;"></div>
<div style="left:526px;top:135px;width:100px;height:1px;background:#808080;"></div>
<div style="left:625px;top:124px;width:1px;height:12px;background:#808080;"></div>
<div style="left:525px;top:149px;width:102px;height:14px;background:#c0c0c0;"></div>
<div style="left:525px;top:149px;width:101px;height:1px;background:#fff;"></div>
<div style="left:525px;top:149px;width:1px;height:13px;background:#fff;"></div>
<div style="left:526px;top:150px;width:99px;height:1px;background:#dfdfdf;"></div>
<div style="left:526px;top:150px;width:1px;height:11px;background:#dfdfdf;"></div>
<div style="left:525px;top:162px;width:102px;height:1px;background:#000;"></div>
<div style="left:626px;top:149px;width:1px;height:14px;background:#000;"></div>
<div style="left:526px;top:161px;width:100px;height:1px;background:#808080;"></div>
<div style="left:625px;top:150px;width:1px;height:12px;background:#808080;"></div>
<div style="left:525px;top:175px;width:102px;height:13px;background:#c0c0c0;"></div>
<div style="left:525px;top:175px;width:101px;height:1px;background:#fff;"></div>
<div style="left:525px;top:175px;width:1px;height:12px;background:#fff;"></div>
<div style="left:526px;top:176px;width:99px;height:1px;background:#dfdfdf;"></div>
<div style="left:526px;top:176px;width:1px;height:10px;background:#dfdfdf;"></div>
<div style="left:525px;top:187px;width:102px;height:1px;background:#000;"></div>
<div style="left:626px;top:175px;width:1px;height:13px;background:#000;"></div>
<div style="left:526px;top:186px;width:100px;height:1px;background:#808080;"></div>
<div style="left:625px;top:176px;width:1px;height:11px;background:#808080;"></div>
<div style="left:465px;top:213px;width:166px;height:1px;background:#808080;"></div>
<div style="left:466px;top:214px;width:165px;height:1px;background:#fff;"></div>
<div style="left:465px;top:213px;width:1px;height:39px;background:#808080;"></div>
<div style="left:466px;top:214px;width:1px;height:38px;background:#fff;"></div>
<div style="left:630px;top:213px;width:1px;height:39px;background:#808080;"></div>
<div style="left:631px;top:213px;width:1px;height:40px;background:#fff;"></div>
<div style="left:472px;top:213px;width:59px;height:2px;background:#c0c0c0;"></div>
<span class="tx" style="left:472px;transform-origin:0 0;top:207px;font-size:11.7px;font-weight:400;color:#000;line-height:14px;transform:scaleX(0.9381);">Filter Status</span>
<svg style="left:474px;top:223px" width="12" height="12" viewBox="0 0 12 12"><circle cx="6" cy="6" r="5.5" fill="#fff"/><path d="M10 2 A5.5 5.5 0 0 0 2 10" stroke="#808080" stroke-width="1" fill="none"/><path d="M9.2 2.800 A4.500 4.500 0 0 0 2.800 9.200" stroke="#000" stroke-width="1.500" fill="none"/><path d="M2 10 A5.5 5.5 0 0 0 10 2" stroke="#fff" stroke-width="1" fill="none"/><path d="M2.8 9.2 A4.5 4.5 0 0 0 9.2 2.8" stroke="#dfdfdf" stroke-width="1" fill="none"/><path d="M5 4h2v1h1v2h-1v1h-2v-1h-1v-2h1z" fill="#000"/></svg>
<span class="tx" style="left:490px;transform-origin:0 0;top:222px;font-size:11.7px;font-weight:400;color:#000;line-height:14px;transform:scaleX(0.9533);">All Dogs</span>
<svg style="left:474px;top:239px" width="12" height="12" viewBox="0 0 12 12"><circle cx="6" cy="6" r="5.5" fill="#fff"/><path d="M10 2 A5.5 5.5 0 0 0 2 10" stroke="#808080" stroke-width="1" fill="none"/><path d="M9.2 2.800 A4.500 4.500 0 0 0 2.800 9.200" stroke="#000" stroke-width="1.500" fill="none"/><path d="M2 10 A5.5 5.5 0 0 0 10 2" stroke="#fff" stroke-width="1" fill="none"/><path d="M2.8 9.2 A4.5 4.5 0 0 0 9.2 2.8" stroke="#dfdfdf" stroke-width="1" fill="none"/></svg>
<span class="tx" style="left:490px;transform-origin:0 0;top:238px;font-size:11.7px;font-weight:400;color:#000;line-height:14px;transform:scaleX(0.9303);">Out of Kennel</span>
<div style="left:1px;top:242px;width:638px;height:10px;background:#c0c0c0;"></div>
<div style="left:4px;top:242px;width:632px;height:1px;background:#808080;"></div>
<div style="left:4px;top:244px;width:632px;height:1px;background:#fff;"></div>
<div style="left:4px;top:248px;width:632px;height:1px;background:#808080;"></div>
<div style="left:639px;top:75px;width:1px;height:390px;background:#000;"></div>
<div style="left:636px;top:77px;width:3px;height:386px;background:#d0d0d0;"></div>
<div style="left:7px;top:254px;width:626px;height:204px;background:#fff;"></div>
<div style="left:4px;top:250px;width:632px;height:1px;background:#fff;"></div>
<div style="left:4px;top:251px;width:632px;height:1px;background:#fff;"></div>
<div style="left:4px;top:250px;width:1px;height:210px;background:#fff;"></div>
<div style="left:5px;top:252px;width:629px;height:1px;background:#808080;"></div>
<div style="left:5px;top:252px;width:1px;height:206px;background:#808080;"></div>
<div style="left:6px;top:253px;width:627px;height:1px;background:#000;"></div>
<div style="left:6px;top:253px;width:1px;height:205px;background:#000;"></div>
<div style="left:633px;top:251px;width:1px;height:209px;background:#fff;"></div>
<div style="left:634px;top:251px;width:1px;height:209px;background:#fff;"></div>
<div style="left:635px;top:251px;width:1px;height:210px;background:#808080;"></div>
<div style="left:4px;top:458px;width:631px;height:1px;background:#fff;"></div>
<div style="left:4px;top:459px;width:631px;height:1px;background:#fff;"></div>
<div style="left:4px;top:460px;width:632px;height:1px;background:#808080;"></div>
<div style="left:7px;top:254px;width:610px;height:18px;background:#c0c0c0;"></div>
<div style="left:7px;top:254px;width:11px;height:1px;background:#fff;"></div>
<div style="left:7px;top:254px;width:1px;height:17px;background:#fff;"></div>
<div style="left:17px;top:255px;width:1px;height:17px;background:#808080;"></div>
<div style="left:8px;top:271px;width:10px;height:1px;background:#808080;"></div>
<div style="left:18px;top:254px;width:1px;height:19px;background:#000;"></div>
<div style="left:19px;top:254px;width:50px;height:1px;background:#fff;"></div>
<div style="left:19px;top:254px;width:1px;height:17px;background:#fff;"></div>
<div style="left:20px;top:271px;width:49px;height:1px;background:#808080;"></div>
<div style="left:68px;top:255px;width:1px;height:17px;background:#808080;"></div>
<div style="left:69px;top:254px;width:1px;height:19px;background:#000;"></div>
<div style="left:19px;top:255px;width:50px;height:16px;overflow:hidden"><span class="tx" style="position:absolute;white-space:pre;left:1px;transform-origin:0 0;top:1px;font-size:11.7px;color:#000;line-height:14px;transform:scaleX(0.9170)">Id</span></div>
<div style="left:70px;top:254px;width:117px;height:1px;background:#fff;"></div>
<div style="left:70px;top:254px;width:1px;height:17px;background:#fff;"></div>
<div style="left:71px;top:271px;width:116px;height:1px;background:#808080;"></div>
<div style="left:186px;top:255px;width:1px;height:17px;background:#808080;"></div>
<div style="left:187px;top:254px;width:1px;height:19px;background:#000;"></div>
<div style="left:70px;top:255px;width:117px;height:16px;overflow:hidden"><span class="tx" style="position:absolute;white-space:pre;left:1px;transform-origin:0 0;top:1px;font-size:11.7px;color:#000;line-height:14px;transform:scaleX(0.9170)">Name</span></div>
<div style="left:188px;top:254px;width:25px;height:1px;background:#fff;"></div>
<div style="left:188px;top:254px;width:1px;height:17px;background:#fff;"></div>
<div style="left:189px;top:271px;width:24px;height:1px;background:#808080;"></div>
<div style="left:212px;top:255px;width:1px;height:17px;background:#808080;"></div>
<div style="left:213px;top:254px;width:1px;height:19px;background:#000;"></div>
<div style="left:188px;top:255px;width:25px;height:16px;overflow:hidden"><span class="tx" style="position:absolute;white-space:pre;left:1px;transform-origin:0 0;top:1px;font-size:11.7px;color:#000;line-height:14px;transform:scaleX(0.9170)">Sex</span></div>
<div style="left:214px;top:254px;width:68px;height:1px;background:#fff;"></div>
<div style="left:214px;top:254px;width:1px;height:17px;background:#fff;"></div>
<div style="left:215px;top:271px;width:67px;height:1px;background:#808080;"></div>
<div style="left:281px;top:255px;width:1px;height:17px;background:#808080;"></div>
<div style="left:282px;top:254px;width:1px;height:19px;background:#000;"></div>
<div style="left:214px;top:255px;width:68px;height:16px;overflow:hidden"><span class="tx" style="position:absolute;white-space:pre;left:1px;transform-origin:0 0;top:1px;font-size:11.7px;color:#000;line-height:14px;transform:scaleX(0.9170)">Born</span></div>
<div style="left:283px;top:254px;width:155px;height:1px;background:#fff;"></div>
<div style="left:283px;top:254px;width:1px;height:17px;background:#fff;"></div>
<div style="left:284px;top:271px;width:154px;height:1px;background:#808080;"></div>
<div style="left:437px;top:255px;width:1px;height:17px;background:#808080;"></div>
<div style="left:438px;top:254px;width:1px;height:19px;background:#000;"></div>
<div style="left:283px;top:255px;width:155px;height:16px;overflow:hidden"><span class="tx" style="position:absolute;white-space:pre;left:1px;transform-origin:0 0;top:1px;font-size:11.7px;color:#000;line-height:14px;transform:scaleX(0.9170)">Father</span></div>
<div style="left:439px;top:254px;width:155px;height:1px;background:#fff;"></div>
<div style="left:439px;top:254px;width:1px;height:17px;background:#fff;"></div>
<div style="left:440px;top:271px;width:154px;height:1px;background:#808080;"></div>
<div style="left:593px;top:255px;width:1px;height:17px;background:#808080;"></div>
<div style="left:594px;top:254px;width:1px;height:19px;background:#000;"></div>
<div style="left:439px;top:255px;width:155px;height:16px;overflow:hidden"><span class="tx" style="position:absolute;white-space:pre;left:1px;transform-origin:0 0;top:1px;font-size:11.7px;color:#000;line-height:14px;transform:scaleX(0.9170)">Mother</span></div>
<div style="left:595px;top:254px;width:22px;height:1px;background:#fff;"></div>
<div style="left:595px;top:254px;width:1px;height:17px;background:#fff;"></div>
<div style="left:596px;top:271px;width:21px;height:1px;background:#808080;"></div>
<div style="left:595px;top:255px;width:22px;height:16px;overflow:hidden"><span class="tx" style="position:absolute;white-space:pre;left:1px;transform-origin:0 0;top:1px;font-size:11.7px;color:#000;line-height:14px;transform:scaleX(0.9170)">Breeder</span></div>
<div style="left:7px;top:272px;width:610px;height:1px;background:#000;"></div>
<div style="left:7px;top:273px;width:11px;height:18px;background:#c0c0c0;"></div>
<div style="left:7px;top:273px;width:11px;height:1px;background:#fff;"></div>
<div style="left:7px;top:273px;width:1px;height:18px;background:#fff;"></div>
<div style="left:17px;top:274px;width:1px;height:17px;background:#808080;"></div>
<div style="left:8px;top:290px;width:10px;height:1px;background:#808080;"></div>
<div style="left:18px;top:273px;width:1px;height:19px;background:#000;"></div>
<div style="left:7px;top:291px;width:12px;height:1px;background:#000;"></div>
<div style="left:19px;top:273px;width:51px;height:19px;background:#c0c0c0;"></div>
<div style="left:19px;top:273px;width:50px;height:18px;overflow:hidden"><span class="tx" style="position:absolute;white-space:pre;left:20.98px;transform-origin:100% 0;top:2px;font-size:11.7px;color:#000;line-height:14px;transform:scaleX(0.9170)">2002</span></div>
<div style="left:187px;top:273px;width:1px;height:19px;background:#c0c0c0;"></div>
<div style="left:70px;top:291px;width:117px;height:1px;background:#c0c0c0;"></div>
<div style="left:70px;top:273px;width:117px;height:18px;overflow:hidden"><span class="tx" style="position:absolute;white-space:pre;left:1px;transform-origin:0 0;top:2px;font-size:11.7px;color:#000;line-height:14px;transform:scaleX(0.8600)">50</span></div>
<div style="left:213px;top:273px;width:1px;height:19px;background:#c0c0c0;"></div>
<div style="left:188px;top:291px;width:25px;height:1px;background:#c0c0c0;"></div>
<div style="left:188px;top:273px;width:25px;height:18px;overflow:hidden"><span class="tx" style="position:absolute;white-space:pre;left:1px;transform-origin:0 0;top:2px;font-size:11.7px;color:#000;line-height:14px;transform:scaleX(0.8718)">M</span></div>
<div style="left:282px;top:273px;width:1px;height:19px;background:#c0c0c0;"></div>
<div style="left:214px;top:291px;width:68px;height:1px;background:#c0c0c0;"></div>
<div style="left:214px;top:273px;width:68px;height:18px;overflow:hidden"><span class="tx" style="position:absolute;white-space:pre;left:1px;transform-origin:0 0;top:2px;font-size:11.7px;color:#000;line-height:14px;transform:scaleX(0.9417)">1985</span></div>
<div style="left:438px;top:273px;width:1px;height:19px;background:#c0c0c0;"></div>
<div style="left:283px;top:291px;width:155px;height:1px;background:#c0c0c0;"></div>
<div style="left:283px;top:273px;width:155px;height:18px;overflow:hidden"><span class="tx" style="position:absolute;white-space:pre;left:1px;transform-origin:0 0;top:2px;font-size:11.7px;color:#000;line-height:14px;transform:scaleX(0.9511)">ZOT (ATTLA G.)</span></div>
<div style="left:594px;top:273px;width:1px;height:19px;background:#c0c0c0;"></div>
<div style="left:439px;top:291px;width:155px;height:1px;background:#c0c0c0;"></div>
<div style="left:439px;top:273px;width:155px;height:18px;overflow:hidden"><span class="tx" style="position:absolute;white-space:pre;left:1px;transform-origin:0 0;top:2px;font-size:11.7px;color:#000;line-height:14px;transform:scaleX(0.8571)">SWEET HEART</span></div>
<div style="left:595px;top:291px;width:22px;height:1px;background:#c0c0c0;"></div>
<div style="left:595px;top:273px;width:22px;height:18px;overflow:hidden"><span class="tx" style="position:absolute;white-space:pre;left:1px;transform-origin:0 0;top:2px;font-size:11.7px;color:#000;line-height:14px;transform:scaleX(0.8600)">GAIR</span></div>
<div style="left:7px;top:292px;width:11px;height:18px;background:#c0c0c0;"></div>
<div style="left:7px;top:292px;width:11px;height:1px;background:#fff;"></div>
<div style="left:7px;top:292px;width:1px;height:18px;background:#fff;"></div>
<div style="left:17px;top:293px;width:1px;height:17px;background:#808080;"></div>
<div style="left:8px;top:309px;width:10px;height:1px;background:#808080;"></div>
<div style="left:18px;top:292px;width:1px;height:19px;background:#000;"></div>
<div style="left:7px;top:310px;width:12px;height:1px;background:#000;"></div>
<div style="left:19px;top:292px;width:51px;height:19px;background:#c0c0c0;"></div>
<div style="left:19px;top:292px;width:50px;height:18px;overflow:hidden"><span class="tx" style="position:absolute;white-space:pre;left:27.48px;transform-origin:100% 0;top:2px;font-size:11.7px;color:#000;line-height:14px;transform:scaleX(0.9170)">962</span></div>
<div style="left:187px;top:292px;width:1px;height:19px;background:#c0c0c0;"></div>
<div style="left:70px;top:310px;width:117px;height:1px;background:#c0c0c0;"></div>
<div style="left:70px;top:292px;width:117px;height:18px;overflow:hidden"><span class="tx" style="position:absolute;white-space:pre;left:2px;transform-origin:0 0;top:2px;font-size:11.7px;color:#000;line-height:14px;transform:scaleX(0.8661)">A&#x27;BEN</span></div>
<div style="left:213px;top:292px;width:1px;height:19px;background:#c0c0c0;"></div>
<div style="left:188px;top:310px;width:25px;height:1px;background:#c0c0c0;"></div>
<div style="left:188px;top:292px;width:25px;height:18px;overflow:hidden"><span class="tx" style="position:absolute;white-space:pre;left:1px;transform-origin:0 0;top:2px;font-size:11.7px;color:#000;line-height:14px;transform:scaleX(0.8718)">M</span></div>
<div style="left:282px;top:292px;width:1px;height:19px;background:#c0c0c0;"></div>
<div style="left:214px;top:310px;width:68px;height:1px;background:#c0c0c0;"></div>
<div style="left:214px;top:292px;width:68px;height:18px;overflow:hidden"><span class="tx" style="position:absolute;white-space:pre;left:1px;transform-origin:0 0;top:2px;font-size:11.7px;color:#000;line-height:14px;transform:scaleX(0.9417)">1985</span></div>
<div style="left:438px;top:292px;width:1px;height:19px;background:#c0c0c0;"></div>
<div style="left:283px;top:310px;width:155px;height:1px;background:#c0c0c0;"></div>
<div style="left:594px;top:292px;width:1px;height:19px;background:#c0c0c0;"></div>
<div style="left:439px;top:310px;width:155px;height:1px;background:#c0c0c0;"></div>
<div style="left:595px;top:310px;width:22px;height:1px;background:#c0c0c0;"></div>
<div style="left:595px;top:292px;width:22px;height:18px;overflow:hidden"><span class="tx" style="position:absolute;white-space:pre;left:1px;transform-origin:0 0;top:2px;font-size:11.7px;color:#000;line-height:14px;transform:scaleX(0.8600)">BORI</span></div>
<div style="left:7px;top:311px;width:11px;height:18px;background:#c0c0c0;"></div>
<div style="left:7px;top:311px;width:11px;height:1px;background:#fff;"></div>
<div style="left:7px;top:311px;width:1px;height:18px;background:#fff;"></div>
<div style="left:17px;top:312px;width:1px;height:17px;background:#808080;"></div>
<div style="left:8px;top:328px;width:10px;height:1px;background:#808080;"></div>
<div style="left:18px;top:311px;width:1px;height:19px;background:#000;"></div>
<div style="left:7px;top:329px;width:12px;height:1px;background:#000;"></div>
<div style="left:19px;top:311px;width:51px;height:19px;background:#c0c0c0;"></div>
<div style="left:19px;top:311px;width:50px;height:18px;overflow:hidden"><span class="tx" style="position:absolute;white-space:pre;left:20.98px;transform-origin:100% 0;top:2px;font-size:11.7px;color:#000;line-height:14px;transform:scaleX(0.9170)">1001</span></div>
<div style="left:187px;top:311px;width:1px;height:19px;background:#c0c0c0;"></div>
<div style="left:70px;top:329px;width:117px;height:1px;background:#c0c0c0;"></div>
<div style="left:70px;top:311px;width:117px;height:18px;overflow:hidden"><span class="tx" style="position:absolute;white-space:pre;left:2px;transform-origin:0 0;top:2px;font-size:11.7px;color:#000;line-height:14px;transform:scaleX(0.9110)">A-RIBB</span></div>
<div style="left:213px;top:311px;width:1px;height:19px;background:#c0c0c0;"></div>
<div style="left:188px;top:329px;width:25px;height:1px;background:#c0c0c0;"></div>
<div style="left:188px;top:311px;width:25px;height:18px;overflow:hidden"><span class="tx" style="position:absolute;white-space:pre;left:1px;transform-origin:0 0;top:2px;font-size:11.7px;color:#000;line-height:14px;transform:scaleX(0.8718)">M</span></div>
<div style="left:282px;top:311px;width:1px;height:19px;background:#c0c0c0;"></div>
<div style="left:214px;top:329px;width:68px;height:1px;background:#c0c0c0;"></div>
<div style="left:438px;top:311px;width:1px;height:19px;background:#c0c0c0;"></div>
<div style="left:283px;top:329px;width:155px;height:1px;background:#c0c0c0;"></div>
<div style="left:594px;top:311px;width:1px;height:19px;background:#c0c0c0;"></div>
<div style="left:439px;top:329px;width:155px;height:1px;background:#c0c0c0;"></div>
<div style="left:595px;top:329px;width:22px;height:1px;background:#c0c0c0;"></div>
<div style="left:595px;top:311px;width:22px;height:18px;overflow:hidden"><span class="tx" style="position:absolute;white-space:pre;left:1px;transform-origin:0 0;top:2px;font-size:11.7px;color:#000;line-height:14px;transform:scaleX(0.8600)">GERI</span></div>
<div style="left:7px;top:330px;width:11px;height:18px;background:#c0c0c0;"></div>
<div style="left:7px;top:330px;width:11px;height:1px;background:#fff;"></div>
<div style="left:7px;top:330px;width:1px;height:18px;background:#fff;"></div>
<div style="left:17px;top:331px;width:1px;height:17px;background:#808080;"></div>
<div style="left:8px;top:347px;width:10px;height:1px;background:#808080;"></div>
<div style="left:18px;top:330px;width:1px;height:19px;background:#000;"></div>
<div style="left:7px;top:348px;width:12px;height:1px;background:#000;"></div>
<div style="left:19px;top:330px;width:51px;height:19px;background:#c0c0c0;"></div>
<div style="left:19px;top:330px;width:50px;height:18px;overflow:hidden"><span class="tx" style="position:absolute;white-space:pre;left:27.48px;transform-origin:100% 0;top:2px;font-size:11.7px;color:#000;line-height:14px;transform:scaleX(0.9170)">379</span></div>
<div style="left:187px;top:330px;width:1px;height:19px;background:#c0c0c0;"></div>
<div style="left:70px;top:348px;width:117px;height:1px;background:#c0c0c0;"></div>
<div style="left:70px;top:330px;width:117px;height:18px;overflow:hidden"><span class="tx" style="position:absolute;white-space:pre;left:2px;transform-origin:0 0;top:2px;font-size:11.7px;color:#000;line-height:14px;transform:scaleX(0.9619)">ABBY</span></div>
<div style="left:213px;top:330px;width:1px;height:19px;background:#c0c0c0;"></div>
<div style="left:188px;top:348px;width:25px;height:1px;background:#c0c0c0;"></div>
<div style="left:188px;top:330px;width:25px;height:18px;overflow:hidden"><span class="tx" style="position:absolute;white-space:pre;left:1px;transform-origin:0 0;top:2px;font-size:11.7px;color:#000;line-height:14px;transform:scaleX(0.9103)">F</span></div>
<div style="left:282px;top:330px;width:1px;height:19px;background:#c0c0c0;"></div>
<div style="left:214px;top:348px;width:68px;height:1px;background:#c0c0c0;"></div>
<div style="left:214px;top:330px;width:68px;height:18px;overflow:hidden"><span class="tx" style="position:absolute;white-space:pre;left:1px;transform-origin:0 0;top:2px;font-size:11.7px;color:#000;line-height:14px;transform:scaleX(0.9417)">1983</span></div>
<div style="left:438px;top:330px;width:1px;height:19px;background:#c0c0c0;"></div>
<div style="left:283px;top:348px;width:155px;height:1px;background:#c0c0c0;"></div>
<div style="left:283px;top:330px;width:155px;height:18px;overflow:hidden"><span class="tx" style="position:absolute;white-space:pre;left:1px;transform-origin:0 0;top:2px;font-size:11.7px;color:#000;line-height:14px;transform:scaleX(0.8894)">BUTCH-76 (ALBERT C.)</span></div>
<div style="left:594px;top:330px;width:1px;height:19px;background:#c0c0c0;"></div>
<div style="left:439px;top:348px;width:155px;height:1px;background:#c0c0c0;"></div>
<div style="left:439px;top:330px;width:155px;height:18px;overflow:hidden"><span class="tx" style="position:absolute;white-space:pre;left:2px;transform-origin:0 0;top:2px;font-size:11.7px;color:#000;line-height:14px;transform:scaleX(0.8795)">ALICE-80 (WRIGHT/LEONARD)</span></div>
<div style="left:595px;top:348px;width:22px;height:1px;background:#c0c0c0;"></div>
<div style="left:595px;top:330px;width:22px;height:18px;overflow:hidden"><span class="tx" style="position:absolute;white-space:pre;left:1px;transform-origin:0 0;top:2px;font-size:11.7px;color:#000;line-height:14px;transform:scaleX(0.8600)">HART</span></div>
<div style="left:7px;top:349px;width:11px;height:18px;background:#c0c0c0;"></div>
<div style="left:7px;top:349px;width:11px;height:1px;background:#fff;"></div>
<div style="left:7px;top:349px;width:1px;height:18px;background:#fff;"></div>
<div style="left:17px;top:350px;width:1px;height:17px;background:#808080;"></div>
<div style="left:8px;top:366px;width:10px;height:1px;background:#808080;"></div>
<div style="left:18px;top:349px;width:1px;height:19px;background:#000;"></div>
<div style="left:7px;top:367px;width:12px;height:1px;background:#000;"></div>
<div style="left:19px;top:349px;width:51px;height:19px;background:#c0c0c0;"></div>
<div style="left:19px;top:349px;width:50px;height:18px;overflow:hidden"><span class="tx" style="position:absolute;white-space:pre;left:20.98px;transform-origin:100% 0;top:2px;font-size:11.7px;color:#000;line-height:14px;transform:scaleX(0.9170)">1014</span></div>
<div style="left:187px;top:349px;width:1px;height:19px;background:#c0c0c0;"></div>
<div style="left:70px;top:367px;width:117px;height:1px;background:#c0c0c0;"></div>
<div style="left:70px;top:349px;width:117px;height:18px;overflow:hidden"><span class="tx" style="position:absolute;white-space:pre;left:2px;transform-origin:0 0;top:2px;font-size:11.7px;color:#000;line-height:14px;transform:scaleX(0.9619)">ABBY</span></div>
<div style="left:213px;top:349px;width:1px;height:19px;background:#c0c0c0;"></div>
<div style="left:188px;top:367px;width:25px;height:1px;background:#c0c0c0;"></div>
<div style="left:188px;top:349px;width:25px;height:18px;overflow:hidden"><span class="tx" style="position:absolute;white-space:pre;left:1px;transform-origin:0 0;top:2px;font-size:11.7px;color:#000;line-height:14px;transform:scaleX(0.9103)">F</span></div>
<div style="left:282px;top:349px;width:1px;height:19px;background:#c0c0c0;"></div>
<div style="left:214px;top:367px;width:68px;height:1px;background:#c0c0c0;"></div>
<div style="left:438px;top:349px;width:1px;height:19px;background:#c0c0c0;"></div>
<div style="left:283px;top:367px;width:155px;height:1px;background:#c0c0c0;"></div>
<div style="left:283px;top:349px;width:155px;height:18px;overflow:hidden"><span class="tx" style="position:absolute;white-space:pre;left:1px;transform-origin:0 0;top:2px;font-size:11.7px;color:#000;line-height:14px;transform:scaleX(0.8693)">BURNER-79 (WRIGHT-CHAMPAINE)</span></div>
<div style="left:594px;top:349px;width:1px;height:19px;background:#c0c0c0;"></div>
<div style="left:439px;top:367px;width:155px;height:1px;background:#c0c0c0;"></div>
<div style="left:439px;top:349px;width:155px;height:18px;overflow:hidden"><span class="tx" style="position:absolute;white-space:pre;left:1px;transform-origin:0 0;top:2px;font-size:11.7px;color:#000;line-height:14px;transform:scaleX(0.9053)">BABES (LOVELESS B.)</span></div>
<div style="left:595px;top:367px;width:22px;height:1px;background:#c0c0c0;"></div>
<div style="left:595px;top:349px;width:22px;height:18px;overflow:hidden"><span class="tx" style="position:absolute;white-space:pre;left:1px;transform-origin:0 0;top:2px;font-size:11.7px;color:#000;line-height:14px;transform:scaleX(0.8600)">HOLL</span></div>
<div style="left:7px;top:368px;width:11px;height:18px;background:#c0c0c0;"></div>
<div style="left:7px;top:368px;width:11px;height:1px;background:#fff;"></div>
<div style="left:7px;top:368px;width:1px;height:18px;background:#fff;"></div>
<div style="left:17px;top:369px;width:1px;height:17px;background:#808080;"></div>
<div style="left:8px;top:385px;width:10px;height:1px;background:#808080;"></div>
<div style="left:18px;top:368px;width:1px;height:19px;background:#000;"></div>
<div style="left:7px;top:386px;width:12px;height:1px;background:#000;"></div>
<div style="left:19px;top:368px;width:51px;height:19px;background:#c0c0c0;"></div>
<div style="left:19px;top:368px;width:50px;height:18px;overflow:hidden"><span class="tx" style="position:absolute;white-space:pre;left:27.48px;transform-origin:100% 0;top:2px;font-size:11.7px;color:#000;line-height:14px;transform:scaleX(0.9170)">963</span></div>
<div style="left:187px;top:368px;width:1px;height:19px;background:#c0c0c0;"></div>
<div style="left:70px;top:386px;width:117px;height:1px;background:#c0c0c0;"></div>
<div style="left:70px;top:368px;width:117px;height:18px;overflow:hidden"><span class="tx" style="position:absolute;white-space:pre;left:2px;transform-origin:0 0;top:2px;font-size:11.7px;color:#000;line-height:14px;transform:scaleX(0.8659)">ABLETTE</span></div>
<div style="left:213px;top:368px;width:1px;height:19px;background:#c0c0c0;"></div>
<div style="left:188px;top:386px;width:25px;height:1px;background:#c0c0c0;"></div>
<div style="left:188px;top:368px;width:25px;height:18px;overflow:hidden"><span class="tx" style="position:absolute;white-space:pre;left:1px;transform-origin:0 0;top:2px;font-size:11.7px;color:#000;line-height:14px;transform:scaleX(0.9103)">F</span></div>
<div style="left:282px;top:368px;width:1px;height:19px;background:#c0c0c0;"></div>
<div style="left:214px;top:386px;width:68px;height:1px;background:#c0c0c0;"></div>
<div style="left:214px;top:368px;width:68px;height:18px;overflow:hidden"><span class="tx" style="position:absolute;white-space:pre;left:1px;transform-origin:0 0;top:2px;font-size:11.7px;color:#000;line-height:14px;transform:scaleX(0.9417)">1985</span></div>
<div style="left:438px;top:368px;width:1px;height:19px;background:#c0c0c0;"></div>
<div style="left:283px;top:386px;width:155px;height:1px;background:#c0c0c0;"></div>
<div style="left:594px;top:368px;width:1px;height:19px;background:#c0c0c0;"></div>
<div style="left:439px;top:386px;width:155px;height:1px;background:#c0c0c0;"></div>
<div style="left:595px;top:386px;width:22px;height:1px;background:#c0c0c0;"></div>
<div style="left:595px;top:368px;width:22px;height:18px;overflow:hidden"><span class="tx" style="position:absolute;white-space:pre;left:1px;transform-origin:0 0;top:2px;font-size:11.7px;color:#000;line-height:14px;transform:scaleX(0.8600)">BORI</span></div>
<div style="left:7px;top:387px;width:11px;height:18px;background:#c0c0c0;"></div>
<div style="left:7px;top:387px;width:11px;height:1px;background:#fff;"></div>
<div style="left:7px;top:387px;width:1px;height:18px;background:#fff;"></div>
<div style="left:17px;top:388px;width:1px;height:17px;background:#808080;"></div>
<div style="left:8px;top:404px;width:10px;height:1px;background:#808080;"></div>
<div style="left:18px;top:387px;width:1px;height:19px;background:#000;"></div>
<div style="left:7px;top:405px;width:12px;height:1px;background:#000;"></div>
<div style="left:19px;top:387px;width:51px;height:19px;background:#c0c0c0;"></div>
<div style="left:19px;top:387px;width:50px;height:18px;overflow:hidden"><span class="tx" style="position:absolute;white-space:pre;left:27.48px;transform-origin:100% 0;top:2px;font-size:11.7px;color:#000;line-height:14px;transform:scaleX(0.9170)">335</span></div>
<div style="left:187px;top:387px;width:1px;height:19px;background:#c0c0c0;"></div>
<div style="left:70px;top:405px;width:117px;height:1px;background:#c0c0c0;"></div>
<div style="left:70px;top:387px;width:117px;height:18px;overflow:hidden"><span class="tx" style="position:absolute;white-space:pre;left:2px;transform-origin:0 0;top:2px;font-size:11.7px;color:#000;line-height:14px;transform:scaleX(0.8941)">ACE</span></div>
<div style="left:213px;top:387px;width:1px;height:19px;background:#c0c0c0;"></div>
<div style="left:188px;top:405px;width:25px;height:1px;background:#c0c0c0;"></div>
<div style="left:188px;top:387px;width:25px;height:18px;overflow:hidden"><span class="tx" style="position:absolute;white-space:pre;left:1px;transform-origin:0 0;top:2px;font-size:11.7px;color:#000;line-height:14px;transform:scaleX(0.9103)">F</span></div>
<div style="left:282px;top:387px;width:1px;height:19px;background:#c0c0c0;"></div>
<div style="left:214px;top:405px;width:68px;height:1px;background:#c0c0c0;"></div>
<div style="left:438px;top:387px;width:1px;height:19px;background:#c0c0c0;"></div>
<div style="left:283px;top:405px;width:155px;height:1px;background:#c0c0c0;"></div>
<div style="left:283px;top:387px;width:155px;height:18px;overflow:hidden"><span class="tx" style="position:absolute;white-space:pre;left:1px;transform-origin:0 0;top:2px;font-size:11.7px;color:#000;line-height:14px;transform:scaleX(0.9361)">BLACKEY (MAYO C.)</span></div>
<div style="left:594px;top:387px;width:1px;height:19px;background:#c0c0c0;"></div>
<div style="left:439px;top:405px;width:155px;height:1px;background:#c0c0c0;"></div>
<div style="left:439px;top:387px;width:155px;height:18px;overflow:hidden"><span class="tx" style="position:absolute;white-space:pre;left:1px;transform-origin:0 0;top:2px;font-size:11.7px;color:#000;line-height:14px;transform:scaleX(0.8405)">PICKLES</span></div>
<div style="left:595px;top:405px;width:22px;height:1px;background:#c0c0c0;"></div>
<div style="left:595px;top:387px;width:22px;height:18px;overflow:hidden"><span class="tx" style="position:absolute;white-space:pre;left:1px;transform-origin:0 0;top:2px;font-size:11.7px;color:#000;line-height:14px;transform:scaleX(0.8600)">ORR</span></div>
<div style="left:7px;top:406px;width:11px;height:18px;background:#c0c0c0;"></div>
<div style="left:7px;top:406px;width:11px;height:1px;background:#fff;"></div>
<div style="left:7px;top:406px;width:1px;height:18px;background:#fff;"></div>
<div style="left:17px;top:407px;width:1px;height:17px;background:#808080;"></div>
<div style="left:8px;top:423px;width:10px;height:1px;background:#808080;"></div>
<div style="left:18px;top:406px;width:1px;height:19px;background:#000;"></div>
<div style="left:7px;top:424px;width:12px;height:1px;background:#000;"></div>
<div style="left:19px;top:406px;width:51px;height:19px;background:#c0c0c0;"></div>
<div style="left:19px;top:406px;width:50px;height:18px;overflow:hidden"><span class="tx" style="position:absolute;white-space:pre;left:20.98px;transform-origin:100% 0;top:2px;font-size:11.7px;color:#000;line-height:14px;transform:scaleX(0.9170)">1286</span></div>
<div style="left:187px;top:406px;width:1px;height:19px;background:#c0c0c0;"></div>
<div style="left:70px;top:424px;width:117px;height:1px;background:#c0c0c0;"></div>
<div style="left:70px;top:406px;width:117px;height:18px;overflow:hidden"><span class="tx" style="position:absolute;white-space:pre;left:2px;transform-origin:0 0;top:2px;font-size:11.7px;color:#000;line-height:14px;transform:scaleX(0.8941)">ACE</span></div>
<div style="left:213px;top:406px;width:1px;height:19px;background:#c0c0c0;"></div>
<div style="left:188px;top:424px;width:25px;height:1px;background:#c0c0c0;"></div>
<div style="left:188px;top:406px;width:25px;height:18px;overflow:hidden"><span class="tx" style="position:absolute;white-space:pre;left:1px;transform-origin:0 0;top:2px;font-size:11.7px;color:#000;line-height:14px;transform:scaleX(0.8718)">M</span></div>
<div style="left:282px;top:406px;width:1px;height:19px;background:#c0c0c0;"></div>
<div style="left:214px;top:424px;width:68px;height:1px;background:#c0c0c0;"></div>
<div style="left:214px;top:406px;width:68px;height:18px;overflow:hidden"><span class="tx" style="position:absolute;white-space:pre;left:1px;transform-origin:0 0;top:2px;font-size:11.7px;color:#000;line-height:14px;transform:scaleX(0.9417)">1989</span></div>
<div style="left:438px;top:406px;width:1px;height:19px;background:#c0c0c0;"></div>
<div style="left:283px;top:424px;width:155px;height:1px;background:#c0c0c0;"></div>
<div style="left:283px;top:406px;width:155px;height:18px;overflow:hidden"><span class="tx" style="position:absolute;white-space:pre;left:1px;transform-origin:0 0;top:2px;font-size:11.7px;color:#000;line-height:14px;transform:scaleX(0.8703)">LYLE (STREEPER E.)</span></div>
<div style="left:594px;top:406px;width:1px;height:19px;background:#c0c0c0;"></div>
<div style="left:439px;top:424px;width:155px;height:1px;background:#c0c0c0;"></div>
<div style="left:439px;top:406px;width:155px;height:18px;overflow:hidden"><span class="tx" style="position:absolute;white-space:pre;left:2px;transform-origin:0 0;top:2px;font-size:11.7px;color:#000;line-height:14px;transform:scaleX(0.8885)">AMBER-77 (WRIGHT G.)</span></div>
<div style="left:595px;top:424px;width:22px;height:1px;background:#c0c0c0;"></div>
<div style="left:595px;top:406px;width:22px;height:18px;overflow:hidden"><span class="tx" style="position:absolute;white-space:pre;left:1px;transform-origin:0 0;top:2px;font-size:11.7px;color:#000;line-height:14px;transform:scaleX(0.8600)">STRE</span></div>
<div style="left:70px;top:273px;width:117px;height:18px;background:#000080;"></div>
<div style="left:70px;top:273px;width:115px;height:16px;border:1px dotted #ffff00"></div>
<div style="left:70px;top:273px;width:117px;height:18px;overflow:hidden"><span class="tx" style="position:absolute;white-space:pre;left:1px;transform-origin:0 0;top:2px;font-size:11.7px;color:#fff;line-height:14px;transform:scaleX(0.9170)">50</span></div>
<svg style="left:7px;top:273px" width="11" height="18"><path d="M3 3v12l6.500-6z" fill="#000"/></svg>
<div style="left:617px;top:254px;width:16px;height:188px;background:#fff;background-image:conic-gradient(#fff 25%,#c0c0c0 0 50%,#fff 0 75%,#c0c0c0 0);background-size:2px 2px;"></div>
<div style="left:617px;top:254px;width:16px;height:16px;background:#c0c0c0;"></div>
<div style="left:617px;top:254px;width:15px;height:1px;background:#fff;"></div>
<div style="left:617px;top:254px;width:1px;height:15px;background:#fff;"></div>
<div style="left:618px;top:255px;width:13px;height:1px;background:#dfdfdf;"></div>
<div style="left:618px;top:255px;width:1px;height:13px;background:#dfdfdf;"></div>
<div style="left:617px;top:269px;width:16px;height:1px;background:#000;"></div>
<div style="left:632px;top:254px;width:1px;height:16px;background:#000;"></div>
<div style="left:618px;top:268px;width:14px;height:1px;background:#808080;"></div>
<div style="left:631px;top:255px;width:1px;height:14px;background:#808080;"></div>
<div style="left:617px;top:270px;width:16px;height:7px;background:#c0c0c0;"></div>
<div style="left:617px;top:270px;width:15px;height:1px;background:#fff;"></div>
<div style="left:617px;top:270px;width:1px;height:6px;background:#fff;"></div>
<div style="left:618px;top:271px;width:13px;height:1px;background:#dfdfdf;"></div>
<div style="left:618px;top:271px;width:1px;height:4px;background:#dfdfdf;"></div>
<div style="left:617px;top:276px;width:16px;height:1px;background:#000;"></div>
<div style="left:632px;top:270px;width:1px;height:7px;background:#000;"></div>
<div style="left:618px;top:275px;width:14px;height:1px;background:#808080;"></div>
<div style="left:631px;top:271px;width:1px;height:5px;background:#808080;"></div>
<div style="left:617px;top:426px;width:16px;height:16px;background:#c0c0c0;"></div>
<div style="left:617px;top:426px;width:15px;height:1px;background:#fff;"></div>
<div style="left:617px;top:426px;width:1px;height:15px;background:#fff;"></div>
<div style="left:618px;top:427px;width:13px;height:1px;background:#dfdfdf;"></div>
<div style="left:618px;top:427px;width:1px;height:13px;background:#dfdfdf;"></div>
<div style="left:617px;top:441px;width:16px;height:1px;background:#000;"></div>
<div style="left:632px;top:426px;width:1px;height:16px;background:#000;"></div>
<div style="left:618px;top:440px;width:14px;height:1px;background:#808080;"></div>
<div style="left:631px;top:427px;width:1px;height:14px;background:#808080;"></div>
<svg style="left:617px;top:254px" width="16" height="16"><path d="M4 10h8l-4-4z" fill="#000"/></svg>
<svg style="left:617px;top:426px" width="16" height="16"><path d="M4 6h8l-4 4z" fill="#000"/></svg>
<div style="left:7px;top:442px;width:610px;height:16px;background:#fff;background-image:conic-gradient(#fff 25%,#c0c0c0 0 50%,#fff 0 75%,#c0c0c0 0);background-size:2px 2px;"></div>
<div style="left:7px;top:442px;width:16px;height:16px;background:#c0c0c0;"></div>
<div style="left:7px;top:442px;width:15px;height:1px;background:#fff;"></div>
<div style="left:7px;top:442px;width:1px;height:15px;background:#fff;"></div>
<div style="left:8px;top:443px;width:13px;height:1px;background:#dfdfdf;"></div>
<div style="left:8px;top:443px;width:1px;height:13px;background:#dfdfdf;"></div>
<div style="left:7px;top:457px;width:16px;height:1px;background:#000;"></div>
<div style="left:22px;top:442px;width:1px;height:16px;background:#000;"></div>
<div style="left:8px;top:456px;width:14px;height:1px;background:#808080;"></div>
<div style="left:21px;top:443px;width:1px;height:14px;background:#808080;"></div>
<div style="left:23px;top:442px;width:16px;height:16px;background:#c0c0c0;"></div>
<div style="left:23px;top:442px;width:15px;height:1px;background:#fff;"></div>
<div style="left:23px;top:442px;width:1px;height:15px;background:#fff;"></div>
<div style="left:24px;top:443px;width:13px;height:1px;background:#dfdfdf;"></div>
<div style="left:24px;top:443px;width:1px;height:13px;background:#dfdfdf;"></div>
<div style="left:23px;top:457px;width:16px;height:1px;background:#000;"></div>
<div style="left:38px;top:442px;width:1px;height:16px;background:#000;"></div>
<div style="left:24px;top:456px;width:14px;height:1px;background:#808080;"></div>
<div style="left:37px;top:443px;width:1px;height:14px;background:#808080;"></div>
<div style="left:601px;top:442px;width:16px;height:16px;background:#c0c0c0;"></div>
<div style="left:601px;top:442px;width:15px;height:1px;background:#fff;"></div>
<div style="left:601px;top:442px;width:1px;height:15px;background:#fff;"></div>
<div style="left:602px;top:443px;width:13px;height:1px;background:#dfdfdf;"></div>
<div style="left:602px;top:443px;width:1px;height:13px;background:#dfdfdf;"></div>
<div style="left:601px;top:457px;width:16px;height:1px;background:#000;"></div>
<div style="left:616px;top:442px;width:1px;height:16px;background:#000;"></div>
<div style="left:602px;top:456px;width:14px;height:1px;background:#808080;"></div>
<div style="left:615px;top:443px;width:1px;height:14px;background:#808080;"></div>
<svg style="left:7px;top:442px" width="16" height="16"><path d="M9 4v7l-4-3.500z" fill="#000"/></svg>
<svg style="left:601px;top:442px" width="16" height="16"><path d="M6 4v7l4-3.500z" fill="#000"/></svg>
<div style="left:617px;top:442px;width:16px;height:16px;background:#c0c0c0;"></div>
<div style="left:0px;top:463px;width:640px;height:1px;background:#a0a0a0;"></div>
<div style="left:0px;top:464px;width:640px;height:1px;background:#000;"></div>
<div style="left:0px;top:465px;width:640px;height:15px;background:#c0c0c0;"></div>
<div style="left:0px;top:467px;width:359px;height:1px;background:#fff;"></div>
<div style="left:0px;top:467px;width:1px;height:12px;background:#fff;"></div>
<div style="left:0px;top:479px;width:360px;height:1px;background:#808080;"></div>
<div style="left:359px;top:467px;width:1px;height:13px;background:#808080;"></div>
<div style="left:362px;top:467px;width:77px;height:1px;background:#fff;"></div>
<div style="left:362px;top:467px;width:1px;height:12px;background:#fff;"></div>
<div style="left:362px;top:479px;width:78px;height:1px;background:#808080;"></div>
<div style="left:439px;top:467px;width:1px;height:13px;background:#808080;"></div>
<span class="tx" style="left:364px;transform-origin:0 0;top:466px;font-size:11.7px;font-weight:700;color:#000;line-height:14px;transform:scaleX(0.9353);">Browse</span>
<div style="left:442px;top:467px;width:197px;height:1px;background:#fff;"></div>
<div style="left:442px;top:467px;width:1px;height:12px;background:#fff;"></div>
<div style="left:442px;top:479px;width:198px;height:1px;background:#808080;"></div>
<div style="left:639px;top:467px;width:1px;height:13px;background:#808080;"></div>
<span class="tx" style="left:444px;transform-origin:0 0;top:466px;font-size:11.7px;font-weight:700;color:#000;line-height:14px;transform:scaleX(0.9567);">Record 1 of 2398</span>
</body></html>
